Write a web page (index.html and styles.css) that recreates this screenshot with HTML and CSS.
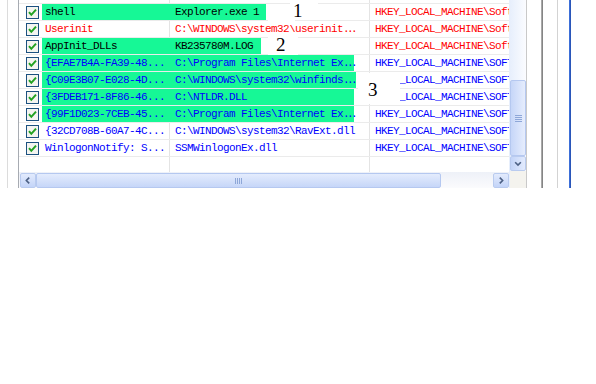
FILE: index.html
```html
<!DOCTYPE html>
<html lang="en">

<head>
    <meta charset="UTF-8">
    <title>Autoruns - Winlogon</title>
    <link rel="stylesheet" href="styles.css">
</head>

<body>
    <div class="frame">
        <div class="edge"></div>
        <div class="gap"></div>

        <div class="list">
            <div class="grid">
                <div class="row partial">
                    <div class="ck"></div><div class="nm"></div><div class="val"></div><div class="key"></div>
                </div>

                <div class="row hl g96">
                    <div class="ck"><svg class="box" viewBox="0 0 13 13"><rect x="0.5" y="0.5" width="12" height="12"/><path d="M3 6.2 L5.3 8.8 L10 3.6"/></svg></div>
                    <div class="nm">shell</div>
                    <div class="val">Explorer.exe 1</div>
                    <div class="key red">HKEY_LOCAL_MACHINE\Software\Microsoft</div>
                </div>

                <div class="row red">
                    <div class="ck"><svg class="box" viewBox="0 0 13 13"><rect x="0.5" y="0.5" width="12" height="12"/><path d="M3 6.2 L5.3 8.8 L10 3.6"/></svg></div>
                    <div class="nm">Userinit</div>
                    <div class="val">C:\WINDOWS\system32\userinit<span class="ell">...</span></div>
                    <div class="key">HKEY_LOCAL_MACHINE\Software\Microsoft</div>
                </div>

                <div class="row hl g91">
                    <div class="ck"><svg class="box" viewBox="0 0 13 13"><rect x="0.5" y="0.5" width="12" height="12"/><path d="M3 6.2 L5.3 8.8 L10 3.6"/></svg></div>
                    <div class="nm">AppInit_DLLs</div>
                    <div class="val">KB235780M.LOG</div>
                    <div class="key red">HKEY_LOCAL_MACHINE\Software\Microsoft</div>
                </div>

                <div class="row blue hl g184">
                    <div class="ck"><svg class="box" viewBox="0 0 13 13"><rect x="0.5" y="0.5" width="12" height="12"/><path d="M3 6.2 L5.3 8.8 L10 3.6"/></svg></div>
                    <div class="nm">{EFAE7B4A-FA39-48...</div>
                    <div class="val">C:\Program Files\Internet Ex<span class="ell">...</span></div>
                    <div class="key">HKEY_LOCAL_MACHINE\SOFTWARE\Microsoft</div>
                </div>

                <div class="row blue hl g186">
                    <div class="ck"><svg class="box" viewBox="0 0 13 13"><rect x="0.5" y="0.5" width="12" height="12"/><path d="M3 6.2 L5.3 8.8 L10 3.6"/></svg></div>
                    <div class="nm">{C09E3B07-E028-4D...</div>
                    <div class="val">C:\WINDOWS\system32\winfinds<span class="ell">...</span></div>
                    <div class="key">HKEY_LOCAL_MACHINE\SOFTWARE\Microsoft</div>
                </div>

                <div class="row blue hl g184">
                    <div class="ck"><svg class="box" viewBox="0 0 13 13"><rect x="0.5" y="0.5" width="12" height="12"/><path d="M3 6.2 L5.3 8.8 L10 3.6"/></svg></div>
                    <div class="nm">{3FDEB171-8F86-46...</div>
                    <div class="val">C:\NTLDR.DLL</div>
                    <div class="key">HKEY_LOCAL_MACHINE\SOFTWARE\Microsoft</div>
                </div>

                <div class="row blue hl g184">
                    <div class="ck"><svg class="box" viewBox="0 0 13 13"><rect x="0.5" y="0.5" width="12" height="12"/><path d="M3 6.2 L5.3 8.8 L10 3.6"/></svg></div>
                    <div class="nm">{99F1D023-7CEB-45...</div>
                    <div class="val">C:\Program Files\Internet Ex<span class="ell">...</span></div>
                    <div class="key">HKEY_LOCAL_MACHINE\SOFTWARE\Microsoft</div>
                </div>

                <div class="row blue">
                    <div class="ck"><svg class="box" viewBox="0 0 13 13"><rect x="0.5" y="0.5" width="12" height="12"/><path d="M3 6.2 L5.3 8.8 L10 3.6"/></svg></div>
                    <div class="nm">{32CD708B-60A7-4C...</div>
                    <div class="val">C:\WINDOWS\system32\RavExt.dll</div>
                    <div class="key">HKEY_LOCAL_MACHINE\SOFTWARE\Microsoft</div>
                </div>

                <div class="row blue">
                    <div class="ck"><svg class="box" viewBox="0 0 13 13"><rect x="0.5" y="0.5" width="12" height="12"/><path d="M3 6.2 L5.3 8.8 L10 3.6"/></svg></div>
                    <div class="nm">WinlogonNotify: S...</div>
                    <div class="val">SSMWinlogonEx.dll</div>
                    <div class="key">HKEY_LOCAL_MACHINE\SOFTWARE\Microsoft</div>
                </div>

                <div class="row filler">
                    <div class="ck"></div><div class="nm"></div><div class="val"></div><div class="key"></div>
                </div>
            </div>

            <div class="hscroll">
                <div class="btn"><svg viewBox="0 0 16 16"><polyline points="9.5,4.5 6,8 9.5,11.5"/></svg></div>
                <div class="hthumb"><svg class="grip" viewBox="0 0 8 6"><path d="M0.5 0v6M2.5 0v6M4.5 0v6M6.5 0v6"/></svg></div>
                <div class="htrack"></div>
                <div class="btn"><svg viewBox="0 0 16 16"><polyline points="6.5,4.5 10,8 6.5,11.5"/></svg></div>
            </div>
        </div>

        <div class="side">
            <div class="vtrack"></div>
            <div class="vthumb"><svg class="grip" viewBox="0 0 7 7"><path d="M0 0.5h7M0 2.5h7M0 4.5h7M0 6.5h7"/></svg></div>
            <div class="btn"><svg viewBox="0 0 16 16"><polyline points="4.5,6.5 8,10 11.5,6.5"/></svg></div>
            <div class="corner"></div>
        </div>

        <div class="rail r1"></div>
        <div class="rail r2"></div>
        <div class="rail r3"></div>
        <div class="rail r4"></div>

        <div class="mark m1">1</div>
        <div class="mark m2">2</div>
        <div class="mark m3">3</div>
    </div>
</body>

</html>
```

FILE: styles.css
```css
body {
    margin: 0;
    background-color: #fff;
    font-family: 'Liberation Mono', 'DejaVu Sans Mono', monospace;
}

.frame {
    position: relative;
    display: flex;
    width: 596px;
    height: 188px;
}

.edge {
    width: 8px;
    border-right: 1px solid #dcdcdc;
    box-sizing: border-box;
}

.gap {
    width: 10px;
}

/* list view */

.list {
    width: 491px;
    border-left: 1px solid #a7abb2;
    box-sizing: border-box;
    display: flex;
    flex-direction: column;
}

.grid {
    flex: 1;
    display: flex;
    flex-direction: column;
    overflow: hidden;
}

.row {
    display: flex;
    height: 17px;
    border-bottom: 1px solid #ebebeb;
    box-sizing: border-box;
    font-size: 11px;
    letter-spacing: -0.6px;
    line-height: 16px;
    white-space: nowrap;
}

.row.partial {
    height: 4px;
}

.row.filler {
    flex: 1;
    border-bottom: none;
}

.ck {
    width: 23px;
    flex: none;
    display: flex;
    align-items: center;
    padding-left: 7px;
    box-sizing: border-box;
}

.nm {
    width: 128px;
    flex: none;
    padding-left: 3px;
    border-right: 1px solid #e4e4e4;
    box-sizing: border-box;
    overflow: hidden;
}

.val {
    width: 200px;
    flex: none;
    padding-left: 5px;
    border-right: 1px solid #e4e4e4;
    box-sizing: border-box;
    overflow: hidden;
}

.key {
    flex: 1;
    padding-left: 5px;
    overflow: hidden;
}

.ell {
    letter-spacing: -2.6px;
}

.red {
    color: #ff0000;
}

.blue {
    color: #0000ff;
}

.box {
    width: 13px;
    height: 13px;
}

.box rect {
    fill: #f4f4f0;
    stroke: #1c5180;
}

.box path {
    fill: none;
    stroke: #21a121;
    stroke-width: 2;
}

/* green highlight */

.hl .nm {
    background-color: #16f896;
    border-right-color: #16f896;
}

.g96 .val {
    background: linear-gradient(to right, #16f896 96px, transparent 96px);
}

.g91 .val {
    background: linear-gradient(to right, #16f896 91px, transparent 91px);
}

.g184 .val {
    background: linear-gradient(to right, #16f896 184px, transparent 184px);
}

.g186 .val {
    background: linear-gradient(to right, #16f896 186px, transparent 186px);
}

/* scroll bars */

.btn {
    width: 16px;
    height: 15px;
    flex: none;
    border: 1px solid #b9cbef;
    border-radius: 2px;
    box-sizing: border-box;
    background: linear-gradient(to bottom, #e3ebfd, #c3d4f8);
}

.btn svg {
    display: block;
    width: 14px;
    height: 13px;
}

.btn polyline {
    fill: none;
    stroke: #4d6185;
    stroke-width: 2;
}

.hscroll {
    height: 16px;
    display: flex;
    align-items: flex-end;
    padding-left: 1px;
    background: linear-gradient(to bottom, #eef1f8, #fbfbfd);
}

.hthumb {
    width: 405px;
    height: 15px;
    flex: none;
    border: 1px solid #b5c8f0;
    border-radius: 2px;
    box-sizing: border-box;
    background: linear-gradient(to bottom, #e4ecfd, #c6d6f8);
    display: flex;
    align-items: center;
    justify-content: center;
}

.htrack {
    flex: 1;
}

.grip {
    width: 8px;
    height: 6px;
}

.grip path {
    stroke: #8ea7d8;
    stroke-width: 1;
}

.side {
    width: 17px;
    display: flex;
    flex-direction: column;
    align-items: stretch;
    padding-left: 1px;
    box-sizing: border-box;
    background: linear-gradient(to right, #e6eefc, #fbfcff);
}

.vtrack {
    height: 80px;
}

.vthumb {
    height: 76px;
    border: 1px solid #b5c8f0;
    border-radius: 2px;
    box-sizing: border-box;
    background: linear-gradient(to right, #c6d6f8, #e6edfd);
    display: flex;
    align-items: center;
    justify-content: center;
}

.vthumb .grip {
    width: 7px;
    height: 7px;
}

.side .btn {
    width: 16px;
    background: linear-gradient(to right, #c3d4f8, #e3ebfd);
}

.corner {
    flex: 1;
    background-color: #f4f3ee;
}

/* window frame lines */

.rail {
    flex: none;
}

.r1 {
    width: 1px;
    background-color: #c9c9c9;
}

.r2 {
    width: 2px;
    margin-left: 14px;
    background: linear-gradient(to right, #a9a9a9 50%, #858585 50%);
}

.r3 {
    width: 1px;
    margin-left: 14px;
    background-color: #d3d3d3;
}

.r4 {
    width: 2px;
    margin-left: 11px;
    background: linear-gradient(to right, #3d6fd8 50%, #2a56b9 50%);
}

/* annotation numbers */

.mark {
    position: absolute;
    background-color: #fff;
    color: #000;
    font-family: 'Liberation Serif', serif;
    font-size: 19px;
    line-height: normal;
    box-sizing: border-box;
}

.m1 {
    left: 290px;
    top: 0;
    width: 28px;
    height: 19px;
    padding-left: 3px;
}

.m1::after {
    content: '';
    position: absolute;
    left: -22px;
    top: 19px;
    width: 27px;
    height: 6px;
    background-color: #fff;
}

.m2 {
    left: 268px;
    top: 34px;
    width: 30px;
    height: 21px;
    padding-left: 8px;
}

.m3 {
    left: 358px;
    top: 73px;
    width: 42px;
    height: 31px;
    padding-left: 10px;
    padding-top: 6px;
}
```
